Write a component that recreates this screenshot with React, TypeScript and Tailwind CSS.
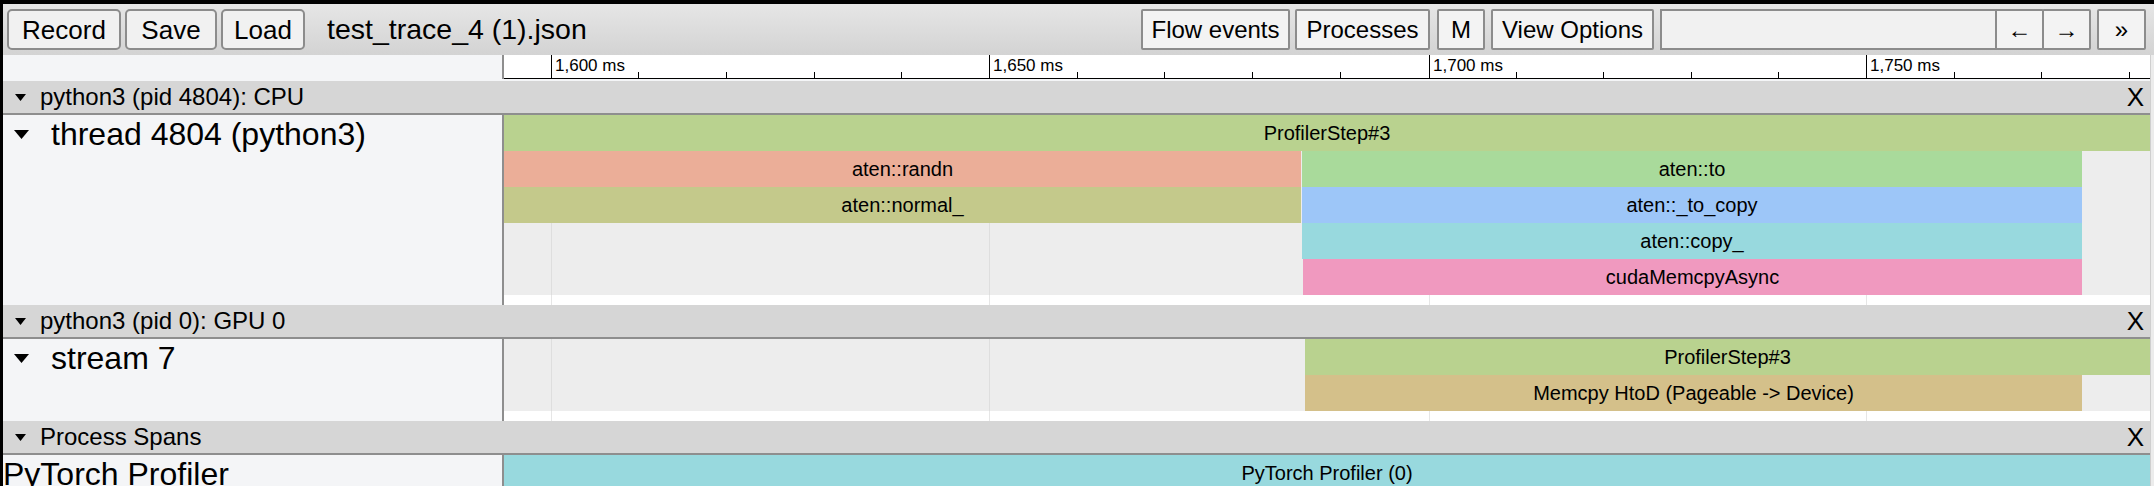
import React from "react";

const X0 = 504; // page x where timeline canvas begins
const MAJOR = [551, 989, 1429, 1866];
const MINOR = [638, 726, 814, 901, 1077, 1164, 1252, 1340, 1516, 1603, 1691, 1778, 1954, 2041, 2129];

type Slice = { row: number; x1: number; x2: number; label: string; color: string };

const TriHeader = () => (
  <svg width="11" height="7" viewBox="0 0 11 7" className="shrink-0">
    <polygon points="0,0 11,0 5.5,7" fill="#000" />
  </svg>
);
const TriTrack = () => (
  <svg width="15" height="9" viewBox="0 0 15 9" className="shrink-0">
    <polygon points="0,0 15,0 7.5,9" fill="#000" />
  </svg>
);

function Header({ title }: { title: string }) {
  return (
    <div className="h-[34px] bg-[#d6d6d6] border-b-2 border-[#8e8e8e] flex items-center pl-[12px] pr-[6px] shrink-0">
      <TriHeader />
      <span className="ml-[14px] text-[24px] leading-none text-black">{title}</span>
      <span className="ml-auto text-[26px] leading-none text-black">X</span>
    </div>
  );
}

function Track({
  label,
  rows,
  slices,
  triangle = true,
}: {
  label: string;
  rows: number;
  slices: Slice[];
  triangle?: boolean;
}) {
  return (
    <div className="flex shrink-0">
      <div className="w-[501px] shrink-0 bg-[#f4f5f7] border-r-2 border-[#8e8e8e] flex items-start pt-[4px]">
        {triangle ? (
          <div className="flex items-center pl-[11px] h-[30px]">
            <TriTrack />
            <span className="ml-[22px] text-[32px] leading-none text-black whitespace-nowrap">{label}</span>
          </div>
        ) : (
          <span className="text-[32px] leading-none text-black whitespace-nowrap -mt-[1px]">{label}</span>
        )}
      </div>
      <div className="flex-1 bg-white flex flex-col">
        <div className="relative bg-[#ededed] overflow-hidden" style={{ height: rows * 36 }}>
          {MAJOR.map((x) => (
            <div key={x} className="absolute top-0 bottom-0 w-px bg-[#dedede]" style={{ left: x - X0 }} />
          ))}
          {slices.map((s, i) => (
            <div
              key={i}
              className="absolute h-[36px] flex items-center justify-center text-[20px] leading-none text-black whitespace-nowrap overflow-hidden"
              style={{ left: s.x1 - X0, width: s.x2 - s.x1, top: s.row * 36, backgroundColor: s.color }}
            >
              {s.label}
            </div>
          ))}
        </div>
        <div className="relative h-[10px] bg-white">
          {MAJOR.map((x) => (
            <div key={x} className="absolute top-0 bottom-0 w-px bg-[#e6e6e6]" style={{ left: x - X0 }} />
          ))}
        </div>
      </div>
    </div>
  );
}

function Btn({ children, w, className = "" }: { children: React.ReactNode; w: number; className?: string }) {
  return (
    <div
      className={
        "h-[41px] border-2 border-[#8c8c8c] rounded-[5px] bg-[#f1f1f1] flex items-center justify-center text-[26px] leading-none text-black shrink-0 " +
        className
      }
      style={{ width: w }}
    >
      {children}
    </div>
  );
}

function SqBtn({ children, w, className = "" }: { children: React.ReactNode; w: number; className?: string }) {
  return (
    <div
      className={
        "h-[41px] border-2 border-[#8c8c8c] rounded-[2px] bg-[#f3f3f3] flex items-center justify-center text-[24px] leading-none text-black shrink-0 " +
        className
      }
      style={{ width: w }}
    >
      {children}
    </div>
  );
}

export default function App() {
  const cpu: Slice[] = [
    { row: 0, x1: 504, x2: 2150, label: "ProfilerStep#3", color: "#b9d28f" },
    { row: 1, x1: 504, x2: 1301, label: "aten::randn", color: "#ebae98" },
    { row: 1, x1: 1302, x2: 2082, label: "aten::to", color: "#a9da9b" },
    { row: 2, x1: 504, x2: 1301, label: "aten::normal_", color: "#c4c98b" },
    { row: 2, x1: 1302, x2: 2082, label: "aten::_to_copy", color: "#9dc6f8" },
    { row: 3, x1: 1302, x2: 2082, label: "aten::copy_", color: "#98d9de" },
    { row: 4, x1: 1303, x2: 2082, label: "cudaMemcpyAsync", color: "#f099bf" },
  ];
  const gpu: Slice[] = [
    { row: 0, x1: 1305, x2: 2150, label: "ProfilerStep#3", color: "#b9d28f" },
    { row: 1, x1: 1305, x2: 2082, label: "Memcpy HtoD (Pageable -> Device)", color: "#d4c08a" },
  ];
  const spans: Slice[] = [{ row: 0, x1: 504, x2: 2150, label: "PyTorch Profiler (0)", color: "#98d9de" }];

  return (
    <div className="w-[2154px] h-[486px] overflow-hidden bg-black pt-[4px] pl-[3px] font-['Liberation_Sans',Arial,sans-serif]">
      <div className="w-[2151px] h-[482px] flex flex-col bg-[#f4f5f7]">
        {/* Toolbar */}
        <div className="h-[51px] shrink-0 flex items-center bg-gradient-to-b from-[#e6e6e6] to-[#d3d3d3] pl-[4px]">
          <Btn w={114}>Record</Btn>
          <Btn w={92} className="ml-[4px]">Save</Btn>
          <Btn w={84} className="ml-[4px]">Load</Btn>
          <span className="ml-[22px] text-[28.5px] leading-none text-black whitespace-nowrap">test_trace_4 (1).json</span>
          <div className="flex-1" />
          <SqBtn w={149}>Flow events</SqBtn>
          <SqBtn w={135} className="ml-[5px]">Processes</SqBtn>
          <SqBtn w={48} className="ml-[7px]">M</SqBtn>
          <SqBtn w={163} className="ml-[6px]">View Options</SqBtn>
          <div className="ml-[6px] h-[41px] w-[337px] border-2 border-[#8c8c8c] bg-[#f1f1f1] shrink-0" />
          <SqBtn w={49} className="-ml-[2px]">←</SqBtn>
          <SqBtn w={49} className="-ml-[2px]">→</SqBtn>
          <SqBtn w={49} className="ml-[6px] text-[18px]">»</SqBtn>
          <div className="w-[8px] shrink-0" />
        </div>
        <div className="flex flex-1 min-h-0">
          <div className="w-[2147px] flex flex-col overflow-hidden">
            {/* Ruler */}
            <div className="h-[24px] shrink-0 flex">
              <div className="w-[501px] shrink-0 bg-[#f4f5f7] border-r-2 border-[#8e8e8e]" />
              <div className="flex-1 relative bg-white border-b border-black">
                {MAJOR.map((x, i) => (
                  <div key={x} className="absolute top-0 bottom-0" style={{ left: x - X0 }}>
                    <div className="absolute top-0 bottom-0 left-0 w-px bg-black" />
                    <span className="absolute left-[4px] top-[2px] text-[17px] leading-none text-black whitespace-nowrap">
                      {["1,600 ms", "1,650 ms", "1,700 ms", "1,750 ms"][i]}
                    </span>
                  </div>
                ))}
                {MINOR.map((x) => (
                  <div key={x} className="absolute bottom-0 h-[6px] w-px bg-black" style={{ left: x - X0 }} />
                ))}
              </div>
            </div>
            <div className="h-[2px] shrink-0 bg-[#f4f5f7]" />
            <Header title="python3 (pid 4804): CPU" />
            <Track label="thread 4804 (python3)" rows={5} slices={cpu} />
            <Header title="python3 (pid 0): GPU 0" />
            <Track label="stream 7" rows={2} slices={gpu} />
            <Header title="Process Spans" />
            <Track label="PyTorch Profiler" rows={1} slices={spans} triangle={false} />
          </div>
          <div className="flex-1 bg-[#ececec] border-l border-[#cfcfcf]" />
        </div>
      </div>
    </div>
  );
}
